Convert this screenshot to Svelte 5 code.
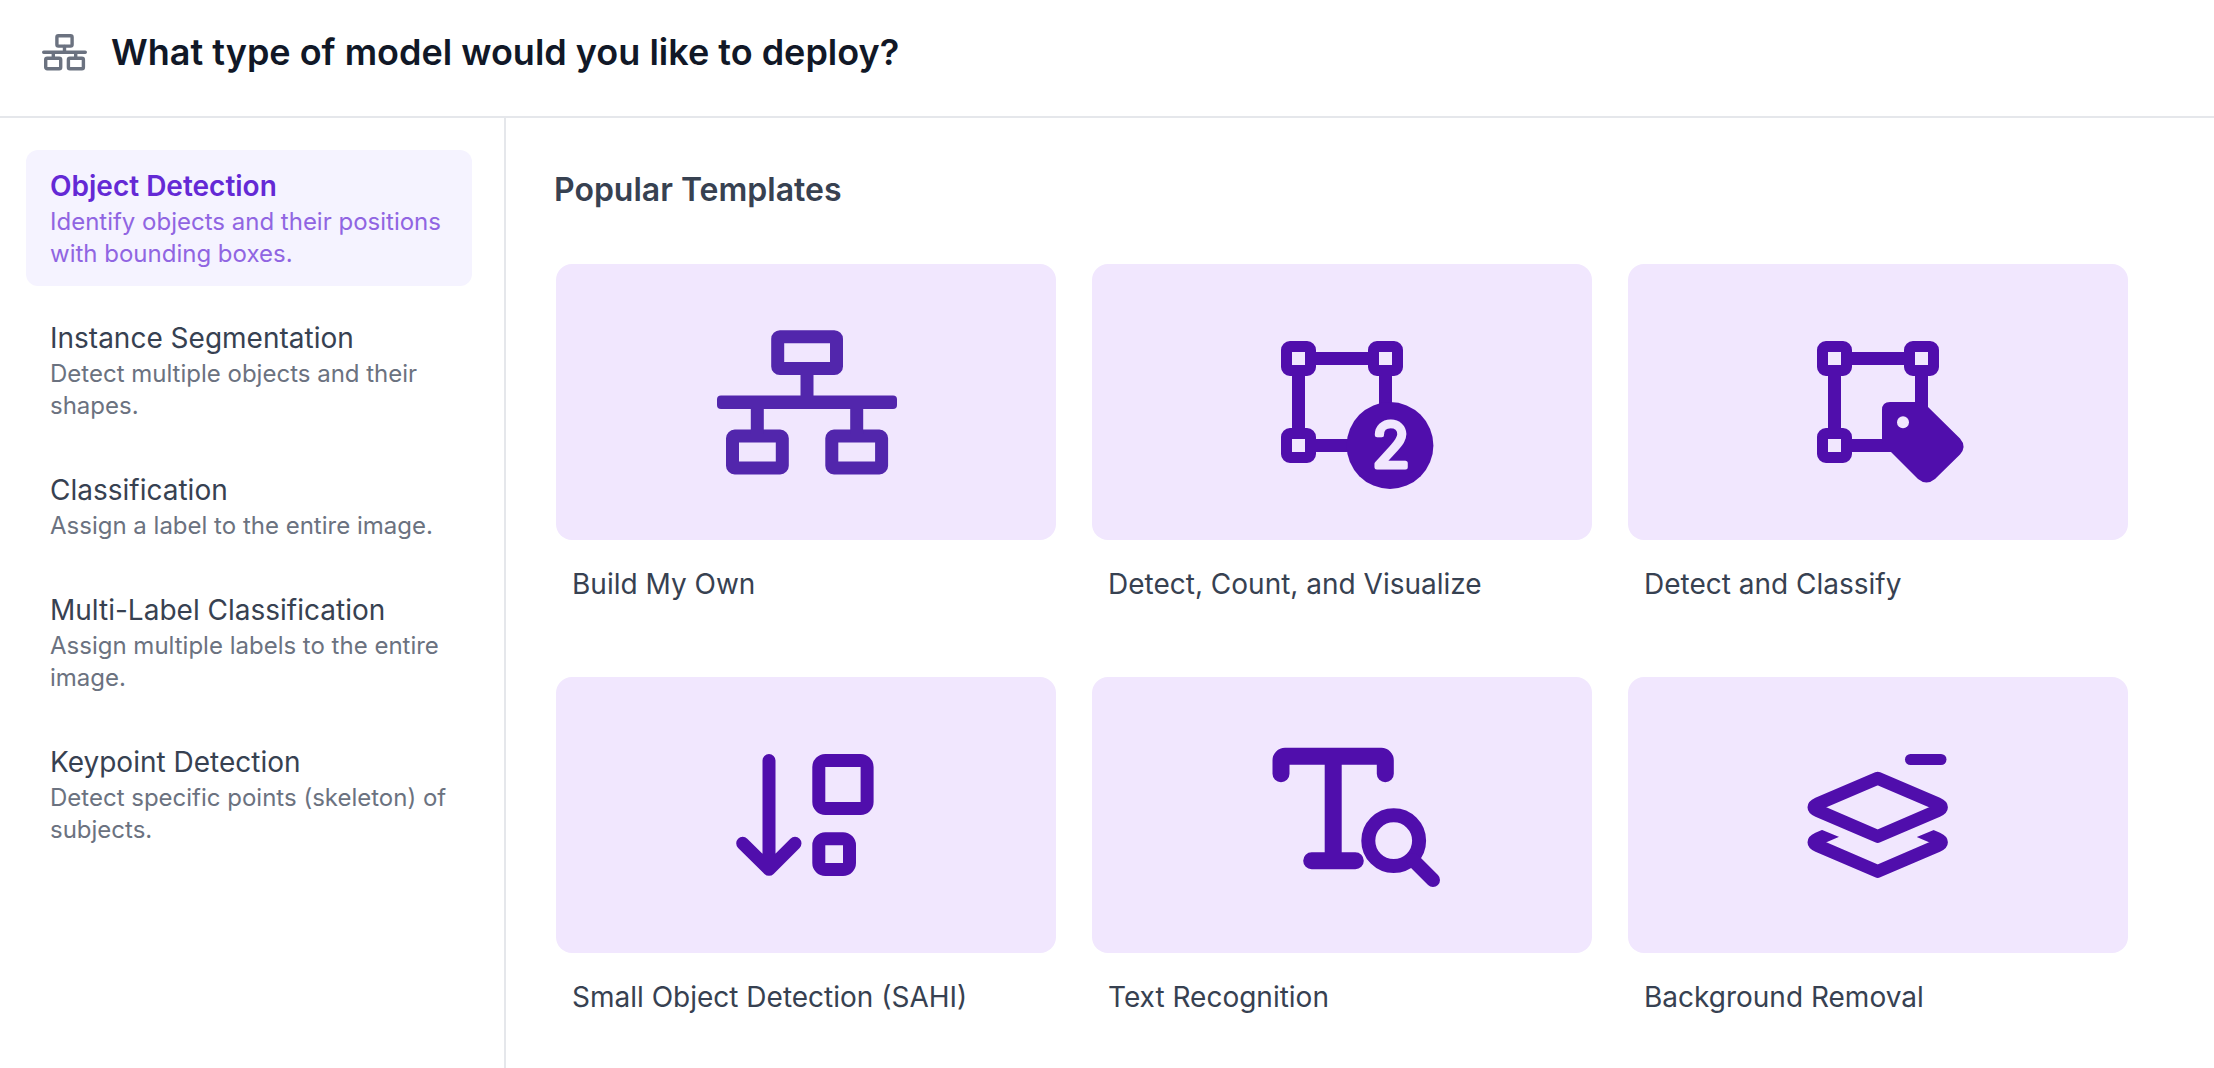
<script>
	// PROPS
	export let heading = 'What type of model would you like to deploy?';

	const modelTypes = [
		{ id: 'object', title: 'Object Detection', text: 'Identify objects and their positions with bounding boxes.' },
		{ id: 'instance', title: 'Instance Segmentation', text: 'Detect multiple objects and their shapes.' },
		{ id: 'single', title: 'Classification', text: 'Assign a label to the entire image.' },
		{ id: 'multi', title: 'Multi-Label Classification', text: 'Assign multiple labels to the entire image.' },
		{ id: 'keypoint', title: 'Keypoint Detection', text: 'Detect specific points (skeleton) of subjects.' }
	];

	const templates = [
		{ icon: 'build', title: 'Build My Own' },
		{ icon: 'count', title: 'Detect, Count, and Visualize' },
		{ icon: 'classify', title: 'Detect and Classify' },
		{ icon: 'small', title: 'Small Object Detection (SAHI)' },
		{ icon: 'text', title: 'Text Recognition' },
		{ icon: 'background', title: 'Background Removal' }
	];

	let selected = 'object';
</script>

<div class="page">
  <header>
    <svg class="logo" viewBox="0 0 45 37" aria-hidden="true">
      <rect x="14.900" y="1.700" width="15.200" height="10.400" rx="1.500" />
      <path d="M22.500 12.500v5.700M1.700 18.300h41.600M11.300 18.300v5.500M33.700 18.300v5.500" />
      <rect x="3.700" y="24.300" width="15" height="10.400" rx="1.500" />
      <rect x="26.400" y="24.300" width="15" height="10.400" rx="1.500" />
    </svg>
    <h1>{heading}</h1>
  </header>

  <div class="body">
    <nav>
      {#each modelTypes as type}
        <button class="type" class:active={selected === type.id} on:click={() => (selected = type.id)}>
          <span class="type-title">{type.title}</span>
          <span class="type-text">{type.text}</span>
        </button>
      {/each}
    </nav>

    <main>
      <h2>Popular Templates</h2>
      <div class="grid">
        {#each templates as template}
          <button class="card">
            <span class="tile">
              <svg class={template.icon} viewBox="-100 -100 200 200" aria-hidden="true">
                {#if template.icon === 'build'}
                  <rect x="-28.300" y="-65.200" width="58.800" height="31.800" rx="2.200" />
                  <rect x="-73.500" y="34.100" width="49.800" height="31.800" rx="2.200" />
                  <rect x="25.800" y="34.100" width="49.800" height="31.800" rx="2.200" />
                  <path d="M1-30V0M-48.700 0v32M50.700 0v32" />
                  <rect class="solid" x="-89" y="-6.600" width="180" height="13.600" rx="4" />
                {:else if template.icon === 'count' || template.icon === 'classify'}
                  <path d="M-30-43.500h60M-43.500-30v60M-30 43.500h45M43.500-30V10" />
                  <g class="handle">
                    <rect x="-55.500" y="-55.500" width="24" height="24" rx="3.500" />
                    <rect x="31.500" y="-55.500" width="24" height="24" rx="3.500" />
                    <rect x="-55.500" y="31.500" width="24" height="24" rx="3.500" />
                  </g>
                  {#if template.icon === 'count'}
                    <circle class="solid" cx="48" cy="43.500" r="43.400" />
                    <text x="49" y="65">2</text>
                  {:else}
                    <path class="solid" d="M12 0H41Q45 0 48 3L82 36.500Q89 44.500 82 52.500L57 77Q48.500 84 40 77L7 44Q4 41 4 37V8Q4 0 12 0z" />
                    <circle class="hole" cx="25" cy="20.300" r="6" />
                  {/if}
                {:else if template.icon === 'small'}
                  <path d="M-37-54.500V54M-63.300 28.300L-37 54.300L-11 28.300" />
                  <rect x="12.800" y="-54.500" width="48.300" height="48" rx="6.500" />
                  <rect x="12.800" y="23.800" width="30.700" height="30.700" rx="6.500" />
                {:else if template.icon === 'text'}
                  <path class="thick" d="M-61-41.300V-54.700a4 4 0 0 1 4-4H39.300a4 4 0 0 1 4 4V-41.300M-8.800-58V45.700M-30.300 45.700H13.300" />
                  <g class="lens">
                    <circle cx="51.700" cy="25.700" r="25.400" />
                    <path d="M71 45L91 65" />
                  </g>
                {:else}
                  <clipPath id="layer-cut">
                    <path d="M-80 5L0 38L80 5V80H-80z" />
                  </clipPath>
                  <path class="dash" d="M32.500-55.500H63" />
                  <path d="M-.3-36.800L59.400-11.200Q67.400-7.700 59.400-4.200L-.3 21.400L-60-4.200Q-68-7.700-60-11.200z" />
                  <g clip-path="url(#layer-cut)">
                    <path d="M-.3-1.800L59.400 23.800Q67.400 27.300 59.400 30.800L-.3 56.400L-60 30.800Q-68 27.300-60 23.800z" />
                  </g>
                {/if}
              </svg>
            </span>
            <span class="card-title">{template.title}</span>
          </button>
        {/each}
      </div>
    </main>
  </div>
</div>

<style>
  :global(body) {
    background: #ffffff;
  }
  .page {
    min-height: 100vh;
    display: flex;
    flex-direction: column;
    font-family: Inter, "Liberation Sans", sans-serif;
    color: #374151;
  }
  header {
    display: flex;
    align-items: center;
    gap: 24px;
    padding: 24px 42px 36px;
    border-bottom: 2px solid #e5e7eb;
  }
  .logo {
    width: 45px;
    height: 37px;
    fill: none;
    stroke: #6b7280;
    stroke-width: 3.4;
    stroke-linecap: round;
  }
  h1 {
    margin: 0;
    font-size: 36px;
    line-height: 56px;
    font-weight: 600;
    color: #111827;
  }
  .body {
    flex: 1;
    display: flex;
  }
  nav {
    box-sizing: border-box;
    width: 506px;
    flex-shrink: 0;
    display: flex;
    flex-direction: column;
    gap: 16px;
    padding: 32px 32px 32px 26px;
    border-right: 2px solid #e5e7eb;
  }
  button {
    font: inherit;
    color: inherit;
    text-align: left;
    border: none;
    background: none;
    cursor: pointer;
  }
  .type {
    display: flex;
    flex-direction: column;
    padding: 16px 24px;
    border-radius: 12px;
  }
  .type-title {
    font-size: 28px;
    line-height: 40px;
  }
  .type-text {
    font-size: 24px;
    line-height: 32px;
    color: #6b7280;
  }
  .active {
    background: #f5f3ff;
  }
  .active .type-title {
    font-weight: 600;
    color: #6429d5;
  }
  .active .type-text {
    color: #9065e2;
  }
  main {
    flex: 1;
    padding: 48px 86px 24px 48px;
  }
  h2 {
    margin: 0 0 50px;
    font-size: 32px;
    line-height: 48px;
    font-weight: 600;
  }
  .grid {
    display: grid;
    grid-template-columns: repeat(3, 1fr);
    gap: 49px 36px;
    padding-left: 2px;
  }
  .card {
    display: flex;
    flex-direction: column;
    padding: 0;
  }
  .tile {
    align-self: stretch;
    display: flex;
    align-items: center;
    justify-content: center;
    height: 276px;
    border-radius: 16px;
    background: #f1e7fe;
    color: #500eac;
  }
  .tile svg {
    width: 200px;
    height: 200px;
    fill: none;
    stroke: currentColor;
    stroke-width: 13;
    stroke-linecap: round;
    stroke-linejoin: round;
  }
  .tile .build {
    color: #5226ac;
    stroke-linecap: butt;
  }
  .solid {
    fill: currentColor;
    stroke: none;
  }
  .hole {
    fill: #f1e7fe;
    stroke: none;
  }
  .handle rect {
    fill: #f1e7fe;
    stroke-width: 11;
  }
  .count text {
    font-size: 62px;
    font-weight: 300;
    font-optical-sizing: none;
    text-anchor: middle;
    fill: #f1e7fe;
    stroke: #f1e7fe;
    stroke-width: 5;
  }
  .thick {
    stroke-width: 17;
  }
  .lens {
    stroke-width: 14;
  }
  .dash {
    stroke-width: 11;
  }
  .card-title {
    padding: 24px 16px;
    font-size: 28px;
    line-height: 40px;
  }
</style>
